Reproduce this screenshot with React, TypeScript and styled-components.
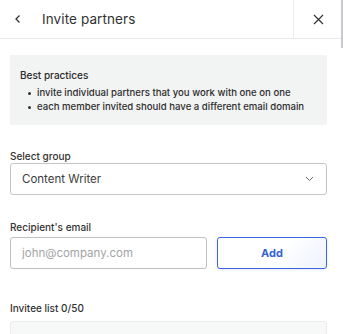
import styled, { createGlobalStyle } from "styled-components";

const GlobalStyle = createGlobalStyle`
  html, body {
    margin: 0;
    padding: 0;
    background: #ffffff;
  }
  body {
    font-family: Inter, "Noto Sans", "Liberation Sans", sans-serif;
    color: #333333;
  }
`;

const practices = [
  "invite individual partners that you work with one on one",
  "each member invited should have a different email domain",
];

const ChevronLeft = () => (
  <svg width="10" height="10" viewBox="0 0 10 10" fill="none">
    <path d="M6.5 1.5 3 5l3.5 3.5" stroke="#333" strokeWidth="1.3" />
  </svg>
);

const CloseIcon = () => (
  <svg width="11" height="11" viewBox="0 0 11 11" fill="none">
    <path d="M1 1l9 9M10 1 1 10" stroke="#333" strokeWidth="1.2" />
  </svg>
);

const ChevronDown = () => (
  <svg width="9" height="6" viewBox="0 0 9 6" fill="none">
    <path d="M1 1l3.5 3.5L8 1" stroke="#6a6a6a" strokeWidth="1" />
  </svg>
);

const App = () => (
  <Panel>
    <GlobalStyle />
    <Header>
      <BackButton>
        <ChevronLeft />
      </BackButton>
      <Title>Invite partners</Title>
      <CloseButton>
        <CloseIcon />
      </CloseButton>
    </Header>
    <Body>
      <Notice>
        <NoticeTitle>Best practices</NoticeTitle>
        <List>
          {practices.map((p) => (
            <Item key={p}>
              <Dot />
              {p}
            </Item>
          ))}
        </List>
      </Notice>

      <Field $top={24}>
        <Label>Select group</Label>
        <Select>
          <span>Content Writer</span>
          <ChevronDown />
        </Select>
      </Field>

      <Field $top={25}>
        <Label>Recipient's email</Label>
        <EmailRow>
          <Input placeholder="john@company.com" />
          <AddButton>Add</AddButton>
        </EmailRow>
      </Field>

      <Field $top={32}>
        <Label $gap={6}>Invitee list 0/50</Label>
        <InviteeBox />
      </Field>
    </Body>
    <Scrollbar />
  </Panel>
);
export default App;

const Panel = styled.div`
  position: relative;
  width: 343px;
  height: 334px;
  overflow: hidden;
  background: #fff;
`;

const Header = styled.div`
  display: flex;
  align-items: center;
  height: 38px;
  border-bottom: 1px solid #e7e7ee;
`;

const BackButton = styled.div`
  width: 42px;
  height: 100%;
  display: flex;
  align-items: center;
  padding-left: 13px;
  box-sizing: border-box;
`;

const Title = styled.div`
  flex: 1;
  font-size: 13.5px;
  color: #333;
  letter-spacing: 0.1px;
`;

const CloseButton = styled.div`
  width: 49px;
  height: 100%;
  display: flex;
  align-items: center;
  justify-content: center;
  border-left: 1px solid #ececf1;
  box-sizing: border-box;
  margin-right: 1px;
`;

const Scrollbar = styled.div`
  position: absolute;
  top: 0;
  right: 0;
  width: 2px;
  height: 48px;
  background: #c9c9cc;
`;

const Body = styled.div`
  padding: 16px 16px 0 10px;
`;

const Notice = styled.div`
  background: #f2f3f3;
  padding: 13px 10px 11px;
`;

const NoticeTitle = styled.div`
  font-size: 10px;
  font-weight: 500;
  line-height: 14px;
  color: #2a2a2a;
`;

const List = styled.div`
  margin-top: 4px;
  display: flex;
  flex-direction: column;
`;

const Item = styled.div`
  display: flex;
  align-items: center;
  font-size: 9.6px;
  font-weight: 500;
  line-height: 14px;
  color: #2e2e2e;
`;

const Dot = styled.span`
  width: 3px;
  height: 3px;
  border-radius: 50%;
  background: #333;
  margin: 0 6px 0 8px;
`;

const Field = styled.div<{ $top: number }>`
  display: flex;
  flex-direction: column;
  margin-top: ${({ $top }) => $top}px;
`;

const Label = styled.div<{ $gap?: number }>`
  font-size: 10px;
  font-weight: 500;
  line-height: 14px;
  color: #333;
  margin-bottom: ${({ $gap }) => $gap ?? 0}px;
`;

const Select = styled.div`
  height: 32px;
  box-sizing: border-box;
  border: 1px solid #c5c5c8;
  border-radius: 3px;
  display: flex;
  align-items: center;
  justify-content: space-between;
  padding: 0 12px 0 11px;
  font-size: 11.5px;
  color: #3d3d3d;
`;

const EmailRow = styled.div`
  display: flex;
  gap: 10px;
  margin-top: 3px;
`;

const Input = styled.input`
  width: 197px;
  height: 32px;
  box-sizing: border-box;
  border: 1px solid #c0c0c3;
  border-radius: 3px;
  padding: 0 11px;
  font-family: inherit;
  font-size: 11.5px;
  outline: none;
  &::placeholder {
    color: #a3a3a6;
  }
`;

const AddButton = styled.button`
  flex: 1;
  height: 32px;
  box-sizing: border-box;
  border: 1.5px solid #3a66df;
  border-radius: 3px;
  background: linear-gradient(135deg, #ffffff 55%, #eef2fd 100%);
  box-shadow: 0 1px 3px rgba(40, 70, 160, 0.12);
  font-family: inherit;
  font-size: 11px;
  font-weight: 700;
  color: #3461d6;
`;

const InviteeBox = styled.div`
  height: 40px;
  background: #f7f8f8;
  border: 1px solid #ececee;
  border-bottom: none;
  border-radius: 3px 3px 0 0;
`;
